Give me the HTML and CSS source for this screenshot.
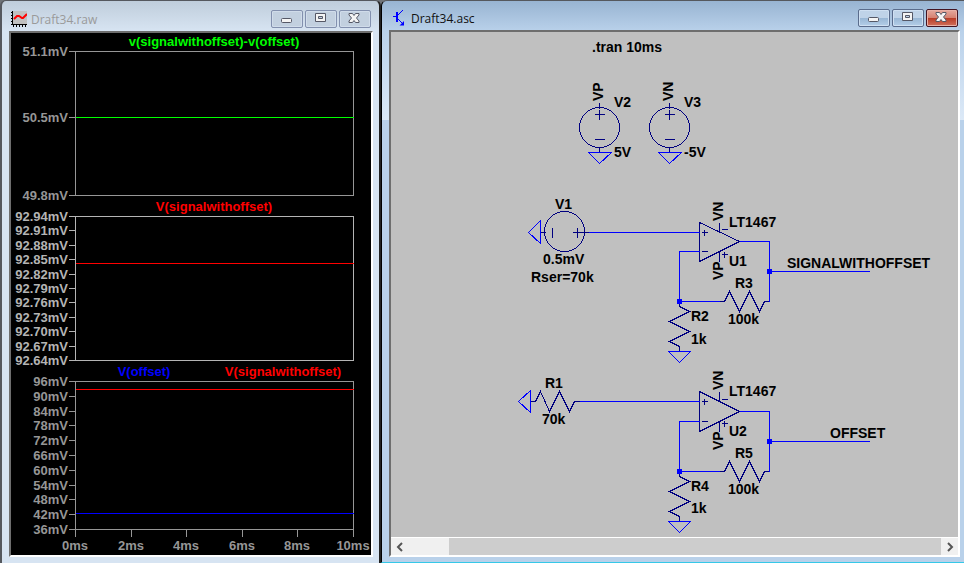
FILE: index.html
```html
<!DOCTYPE html>
<html lang="en">
<head>
<meta charset="utf-8">
<title>Draft34</title>
<link rel="stylesheet" href="styles.css">
</head>
<body>
<main class="desktop">
  <section class="window window-plot" aria-label="Draft34.raw">
    <header class="titlebar">
      <svg class="icon" width="16" height="16" viewBox="0 0 16 16" shape-rendering="crispEdges" aria-hidden="true">
        <path fill="#c0c0c0" d="M2 0h14v14H2z"/>
        <path fill="#000" d="M1 0h1v14H1zM1 13h15v1H1zM0 1h1v1H0zM0 4h1v1H0zM0 7h1v1H0zM0 10h1v1H0zM0 13h1v1H0zM2 14h1v2H2zM5 14h1v2H5zM8 14h1v2H8zM11 14h1v2h-1zM14 14h1v2h-1z"/>
        <path fill="none" stroke="#f00" stroke-width="2" shape-rendering="auto" d="M3 8l3-3h2l3 2h1l4-4"/>
      </svg>
      <h1 class="title">Draft34.raw</h1>
      <div class="controls">
        <button class="control" type="button" aria-label="Minimize"><svg width="14" height="12" viewBox="0 0 14 12"><rect x="2.500" y="6.500" width="10" height="4" rx="1" fill="#f4f4f4" stroke="#555866"/></svg></button>
        <button class="control" type="button" aria-label="Restore"><svg width="14" height="12" viewBox="0 0 14 12"><path fill="#f4f4f4" fill-rule="evenodd" stroke="#555866" d="M2.500 1.500h10v8h-10zM5.500 4.500v2h4v-2z"/></svg></button>
        <button class="control" type="button" aria-label="Close"><svg width="14" height="12" viewBox="0 0 14 12"><path fill="#f4f4f4" stroke="#555866" d="M2 1.500h3.500l1.500 2 1.500-2h3.500v1.500l-2.500 3 2.500 3v1.500h-3.500l-1.500-2-1.500 2h-3.500v-1.500l2.500-3-2.500-3z"/></svg></button>
      </div>
    </header>
    <div class="content">
      <svg class="drawing" viewBox="11 33 360 522" role="img" aria-label="Waveform plots">
        <g class="lines" transform="translate(.5 .5)">
          <path class="axis" d="M68 51H353V195H68M75 51V195M68 117H75"/>
          <path class="axis bright" d="M68 216H353V360H68M75 216V360M68 230h7M68 245h7M68 259h7M68 274h7M68 288h7M68 302h7M68 317h7M68 331h7M68 346h7"/>
          <path class="axis" d="M68 381H353V536M68 529H353M75 381V536M68 396h7M68 411h7M68 425h7M68 440h7M68 455h7M68 470h7M68 485h7M68 499h7M68 514h7M131 529v7M186 529v7M242 529v7M297 529v7"/>
          <path class="trace green" d="M75 117H353"/>
          <path class="trace red" d="M75 263H353M75 389H353"/>
          <path class="trace blue" d="M75 513H353"/>
        </g>
        <g class="names">
          <text class="name-green" x="214" y="46">v(signalwithoffset)-v(offset)</text>
          <text class="name-red" x="214" y="211">V(signalwithoffset)</text>
          <text class="name-blue" x="144" y="376">V(offset)</text>
          <text class="name-red" x="283" y="376">V(signalwithoffset)</text>
        </g>
        <g class="scale">
          <text x="68" y="56">51.1mV</text><text x="68" y="122">50.5mV</text><text x="68" y="200">49.8mV</text>
        </g>
        <g class="scale scale-bright">
          <text x="68" y="221">92.94mV</text><text x="68" y="235">92.91mV</text><text x="68" y="250">92.88mV</text><text x="68" y="264">92.85mV</text><text x="68" y="279">92.82mV</text><text x="68" y="293">92.79mV</text><text x="68" y="307">92.76mV</text><text x="68" y="322">92.73mV</text><text x="68" y="336">92.70mV</text><text x="68" y="351">92.67mV</text><text x="68" y="365">92.64mV</text>
        </g>
        <g class="scale">
          <text x="68" y="386">96mV</text><text x="68" y="401">90mV</text><text x="68" y="416">84mV</text><text x="68" y="430">78mV</text><text x="68" y="445">72mV</text><text x="68" y="460">66mV</text><text x="68" y="475">60mV</text><text x="68" y="490">54mV</text><text x="68" y="504">48mV</text><text x="68" y="519">42mV</text><text x="68" y="534">36mV</text>
        </g>
        <g class="scale scale-time">
          <text x="75" y="550">0ms</text><text x="131" y="550">2ms</text><text x="186" y="550">4ms</text><text x="242" y="550">6ms</text><text x="297" y="550">8ms</text><text x="353" y="550">10ms</text>
        </g>
      </svg>
    </div>
  </section>

  <section class="window window-schematic" aria-label="Draft34.asc">
    <header class="titlebar">
      <svg class="icon" width="16" height="16" viewBox="0 0 16 16" aria-hidden="true">
        <path fill="none" stroke="#00f" d="M2 6.500h4M6 6l6-6M6 8l6 6"/>
        <path fill="#00f" d="M5 2h2v10H5zM13 15.500H8.500L13 11z"/>
      </svg>
      <h1 class="title">Draft34.asc</h1>
      <div class="controls">
        <button class="control" type="button" aria-label="Minimize"><svg width="14" height="12" viewBox="0 0 14 12"><rect x="2.500" y="6.500" width="10" height="4" rx="1" fill="#f4f4f4" stroke="#555866"/></svg></button>
        <button class="control" type="button" aria-label="Restore"><svg width="14" height="12" viewBox="0 0 14 12"><path fill="#f4f4f4" fill-rule="evenodd" stroke="#555866" d="M2.500 1.500h10v8h-10zM5.500 4.500v2h4v-2z"/></svg></button>
        <button class="control control-close" type="button" aria-label="Close"><svg width="14" height="12" viewBox="0 0 14 12"><path fill="#f4f4f4" stroke="#555866" d="M2 1.500h3.500l1.500 2 1.500-2h3.500v1.500l-2.500 3 2.500 3v1.500h-3.500l-1.500-2-1.500 2h-3.500v-1.500l2.500-3-2.500-3z"/></svg></button>
      </div>
    </header>
    <div class="content">
      <svg class="drawing" viewBox="391 32 567 505" role="img" aria-label="Circuit schematic">
        <g class="lines" transform="translate(.5 .5)">
          <!-- voltage sources -->
          <g class="part">
            <circle cx="599" cy="127" r="20"/><path d="M599 102v6M594 114h10M599 109v10M594 139h10M599 147v5"/>
            <circle cx="669" cy="127" r="20"/><path d="M669 102v6M664 114h10M669 109v10M664 139h10M669 147v5"/>
            <circle cx="564" cy="231" r="20"/><path d="M540 232h5M552 227v10M572 232h16M577 227v10"/>
          </g>
          <!-- op amps -->
          <g class="part">
            <path d="M699 222V261L739 241ZM701 232h6M704 229v6M701 251h6M719 222v9M721 229h6M719 251v10M721 254h6M724 251v6"/>
            <path d="M699 391V431L739 411ZM701 401h6M704 398v6M701 421h6M719 391v10M721 399h6M719 421v10M721 423h6M724 420v6"/>
          </g>
          <!-- resistors -->
          <g class="part">
            <path d="M719 301h5l5-10 10 20 10-20 10 20 5-10h5M679 301v5l10 5-20 10 20 10-20 10 10 5v5"/>
            <path d="M719 471h5l5-10 10 20 10-20 10 20 5-10h5M679 471v5l10 5-20 10 20 10-20 10 10 5v5"/>
            <path d="M530 401h5l5-10 9 20 10-20 10 20 5-10h5"/>
          </g>
          <!-- wires and grounds -->
          <g class="wire">
            <path d="M588 232H699M739 241H769V301M769 271H869M699 251H679V301H719"/>
            <path d="M579 401H699M739 411H769V471M769 441H869M699 421H679V471H719"/>
            <path d="M588 152H611L599 163ZM658 152H681L669 163ZM540 220V243L528 232ZM530 390V412L518 401ZM668 351H690L679 362ZM668 521H690L679 532Z"/>
          </g>
        </g>
        <path class="junction" d="M767 269h5v5h-5zM677 299h5v5h-5zM767 439h5v5h-5zM677 469h5v5h-5z"/>
        <g class="labels">
          <text x="592" y="52">.tran 10ms</text>
          <text x="614" y="107">V2</text><text x="614" y="157">5V</text>
          <text x="684" y="107">V3</text><text x="684" y="157">-5V</text>
          <text x="555" y="209">V1</text><text x="543" y="264">0.5mV</text><text x="531" y="282">Rser=70k</text>
          <text x="729" y="227">LT1467</text><text x="729" y="266">U1</text>
          <text x="735" y="288">R3</text><text x="728" y="324">100k</text>
          <text x="691" y="321">R2</text><text x="691" y="344">1k</text>
          <text x="787" y="268">SIGNALWITHOFFSET</text>
          <text x="545" y="388">R1</text><text x="542" y="424">70k</text>
          <text x="729" y="396">LT1467</text><text x="729" y="436">U2</text>
          <text x="735" y="458">R5</text><text x="728" y="494">100k</text>
          <text x="691" y="491">R4</text><text x="691" y="513">1k</text>
          <text x="830" y="438">OFFSET</text>
          <text transform="translate(603 101) rotate(-90)">VP</text>
          <text transform="translate(673 101) rotate(-90)">VN</text>
          <text transform="translate(723 221) rotate(-90)">VN</text>
          <text transform="translate(723 280) rotate(-90)">VP</text>
          <text transform="translate(723 390) rotate(-90)">VN</text>
          <text transform="translate(723 450) rotate(-90)">VP</text>
        </g>
      </svg>
      <div class="scrollbar">
        <button class="scroll-arrow" type="button" aria-label="Scroll left"><svg width="8" height="10" viewBox="0 0 8 10"><path fill="none" stroke="#555" stroke-width="2" d="M6 1L2 5l4 4"/></svg></button>
        <div class="scroll-gap"></div>
        <div class="scroll-thumb"></div>
        <button class="scroll-arrow" type="button" aria-label="Scroll right"><svg width="8" height="10" viewBox="0 0 8 10"><path fill="none" stroke="#555" stroke-width="2" d="M2 1l4 4-4 4"/></svg></button>
      </div>
    </div>
  </section>
</main>
</body>
</html>
```
FILE: styles.css
```css
* {
  box-sizing: border-box;
}

body {
  margin: 0;
  background: #6f7378;
  font-family: "Open Sans", "Noto Sans", sans-serif;
}

.desktop {
  display: grid;
  grid-template-columns: 381fr 583fr;
  min-height: 100vh;
}

.window {
  display: flex;
  flex-direction: column;
  min-width: 0;
  overflow: hidden;
  border-top: 1px solid #55585e;
}

.window-plot {
  padding: 0 6px 6px 7px;
  border-left: 2px solid #55585e;
  border-right: 2px solid #222;
  border-radius: 6px 6px 0 0;
  background: linear-gradient(#bfcddb, #d7e4f2 30px);
}

.window-schematic {
  padding: 0 4px 5px 7px;
  border-left: 1px solid #000;
  border-bottom: 1px solid #35c8e8;
  border-top-left-radius: 6px;
  background: linear-gradient(#98b4d2, #b9d1ea 30px, #dce9f7 119px, #b9d1ea 119px);
}

.titlebar {
  display: flex;
  align-items: flex-start;
  gap: 4px;
  height: 30px;
  padding: 9px 0 0 2px;
}

.window-schematic .titlebar {
  height: 29px;
  padding: 8px 2px 0 2px;
}

.icon {
  flex: none;
  margin-top: 1px;
}

.title {
  flex: 1;
  margin: 0;
  color: #9a9a9a;
  font-size: 12px;
  font-weight: 400;
  line-height: 20px;
}

.window-schematic .title {
  color: #111;
}

.controls {
  display: flex;
  gap: 2px;
  padding-right: 2px;
}

.window-schematic .controls {
  padding-right: 0;
}

.control {
  display: flex;
  align-items: center;
  justify-content: center;
  width: 32px;
  height: 18px;
  padding: 0 2px 2px 0;
  border: 1px solid #8290ae;
  border-radius: 2px;
  background: #c2d0df;
  box-shadow: inset 0 0 0 1px #d0dcea;
}

.window-schematic .control {
  border-color: #5a6c8c;
  background: linear-gradient(#bfd3e8 50%, #98b6d4 50%, #b4cee8);
  box-shadow: inset 0 0 0 1px #cfe0f2;
}

.window-schematic .control-close {
  border-color: #431422;
  background: linear-gradient(#e5a99e, #d58070 50%, #b83a25 50%, #d0705c);
  box-shadow: inset 0 0 0 1px #e8b0a6;
}

.content {
  display: flex;
  flex: 1;
  flex-direction: column;
  border: 2px solid;
  border-color: #6e6e6e #fff #fff #6e6e6e;
}

.window-plot .content {
  background: #000;
}

.window-schematic .content {
  background: #c0c0c0;
}

.drawing {
  display: block;
  width: 100%;
  font-family: "Liberation Sans", Arial, sans-serif;
  font-size: 14px;
  font-weight: 700;
}

.lines {
  fill: none;
  stroke-width: 1px;
  shape-rendering: crispEdges;
}

.axis {
  stroke: #969696;
}

.bright {
  stroke: #b4b4b4;
}

.green {
  stroke: #0f0;
}

.red {
  stroke: #f00;
}

.blue {
  stroke: #00f;
}

.names {
  font-size: 13px;
  text-anchor: middle;
}

.name-green {
  fill: #0f0;
}

.name-red {
  fill: #f00;
}

.name-blue {
  fill: #00f;
}

.scale {
  fill: #969696;
  font-size: 13px;
  text-anchor: end;
}

.scale-bright {
  fill: #b4b4b4;
}

.scale-time {
  text-anchor: middle;
}

.part {
  stroke: #000080;
}

.wire {
  stroke: #00f;
}

.junction {
  fill: #00f;
}

.labels {
  fill: #000;
}

.scrollbar {
  display: flex;
  height: 18px;
  margin-top: auto;
  border-top: 1px solid #fff;
  background: #f0f0f0;
}

.scroll-arrow {
  display: flex;
  flex: none;
  align-items: center;
  justify-content: center;
  width: 17px;
  padding: 0;
  border: 0;
  background: #f0f0f0;
}

.scroll-gap {
  flex: 41;
}

.scroll-thumb {
  flex: 492;
  background: #cdcdcd;
}
```
